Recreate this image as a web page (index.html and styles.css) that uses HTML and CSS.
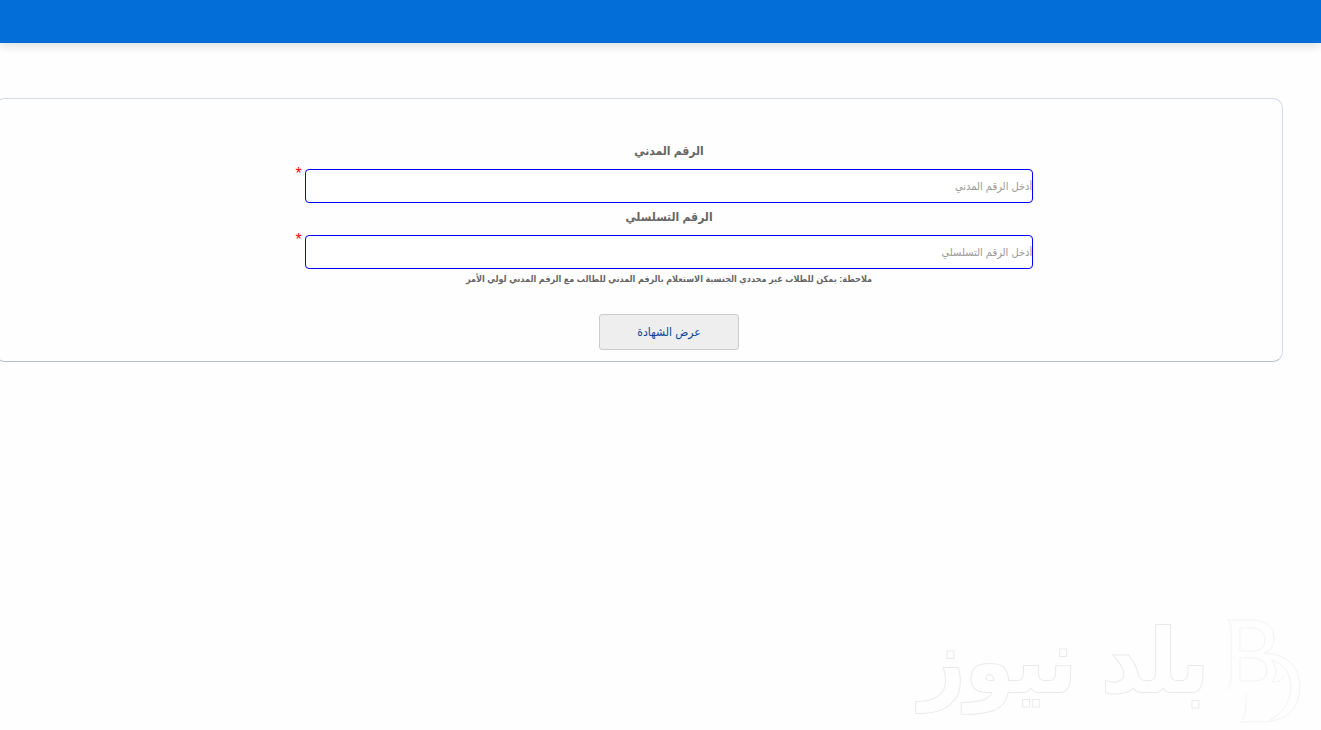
FILE: index.html
```html
<!DOCTYPE html>
<html lang="ar" dir="rtl">
<head>
    <meta charset="UTF-8">
    <meta name="viewport" content="width=device-width, initial-scale=1.0">
    <title>عرض الشهادة</title>
    <link rel="stylesheet" href="styles.css">
</head>
<body>
    <header class="top-bar"></header>

    <main class="page">
        <form class="card">
            <div class="field">
                <label for="civilId">الرقم المدني</label>
                <input type="text" id="civilId" placeholder="أدخل الرقم المدني" required>
                <span class="required">*</span>
            </div>
            <div class="field">
                <label for="serialNo">الرقم التسلسلي</label>
                <input type="text" id="serialNo" placeholder="أدخل الرقم التسلسلي" required>
                <span class="required">*</span>
            </div>
            <p class="note">ملاحظة: يمكن للطلاب غير محددي الجنسية الاستعلام بالرقم المدني للطالب مع الرقم المدني لولي الأمر</p>
            <button type="button" class="submit">عرض الشهادة</button>
        </form>
    </main>

    <footer class="watermark">
        <svg class="watermark-logo" width="78" height="108" viewBox="0 0 78 108" aria-hidden="true">
            <path d="M1 71 Q6 69 6 60 V8 Q6 4 2 2 H28 Q49 3 49 20 Q49 32 39 35 Q74 37 75 69 Q74 102 39 104 H16 Q21 98 21 88 V76"/>
            <path d="M15 10 H28 Q40 11 40 22 Q40 32 29 33 H15 Z"/>
            <path d="M15 40 H29 Q42 42 42 53 Q41 63 29 63 H15 Z"/>
            <path d="M47 42 Q65 47 66 69 Q65 92 44 103 M47 42 Q55 54 47 64 Q55 65 59 58"/>
        </svg>
        <span class="watermark-text">بلد نيوز</span>
    </footer>
</body>
</html>
```
FILE: styles.css
```css
* {
    box-sizing: border-box;
}
body {
    margin: 0;
    min-height: 100vh;
    display: flex;
    flex-direction: column;
    overflow-x: hidden;
    background-color: #fefefe;
    color: #666;
    font-family: "Liberation Sans", "DejaVu Sans Condensed", "DejaVu Sans", sans-serif;
}
.top-bar {
    height: 43px;
    background-color: #036dd8;
    box-shadow: 0 2px 10px rgba(0, 0, 0, 0.15);
}
.page {
    flex: 1;
    padding: 55px 38px 0 0;
}
.card {
    display: flex;
    flex-direction: column;
    align-items: center;
    margin-left: -5px;
    padding: 42px 6px 11px 66px;
    border: 1px solid #d3dbe3;
    border-bottom-color: #b5c0cc;
    border-radius: 10px;
}
.field {
    display: grid;
    grid-template-columns: 1fr 3fr 1fr;
    width: 100%;
}
.field label {
    grid-column: 2;
    height: 28px;
    line-height: 20px;
    text-align: center;
    font-size: 12px;
    font-weight: bold;
}
.field + .field label {
    height: 32px;
    line-height: 28px;
}
.field input {
    grid-column: 2;
    width: 100%;
    height: 34px;
    padding: 0;
    border: 1px solid #00f;
    border-radius: 4px;
    background-color: #fff;
    font-family: inherit;
    font-size: 11px;
}
.field input::placeholder {
    color: #999;
}
.required {
    grid-column: 3;
    padding-right: 3px;
    line-height: 10px;
    font-size: 16px;
    color: #f00;
}
.note {
    margin: 0 0 25px;
    line-height: 20px;
    font-size: 9px;
    font-weight: bold;
}
.submit {
    width: 140px;
    height: 36px;
    border: 1px solid #ccc;
    border-radius: 3px;
    background-color: #eee;
    color: #0d47a1;
    font-family: inherit;
    font-size: 12px;
}
/* faint outlined brand */
.watermark {
    display: flex;
    align-items: center;
    gap: 16px;
    padding: 0 18px 4px;
}
.watermark-logo {
    fill: none;
    stroke: #f3f3f3;
}
.watermark-text {
    font-size: 88px;
    font-weight: bold;
    line-height: 88px;
    padding-bottom: 20px;
    color: #fefefe;
    -webkit-text-stroke: 2px #e8eaea;
    paint-order: stroke fill;
}
```
